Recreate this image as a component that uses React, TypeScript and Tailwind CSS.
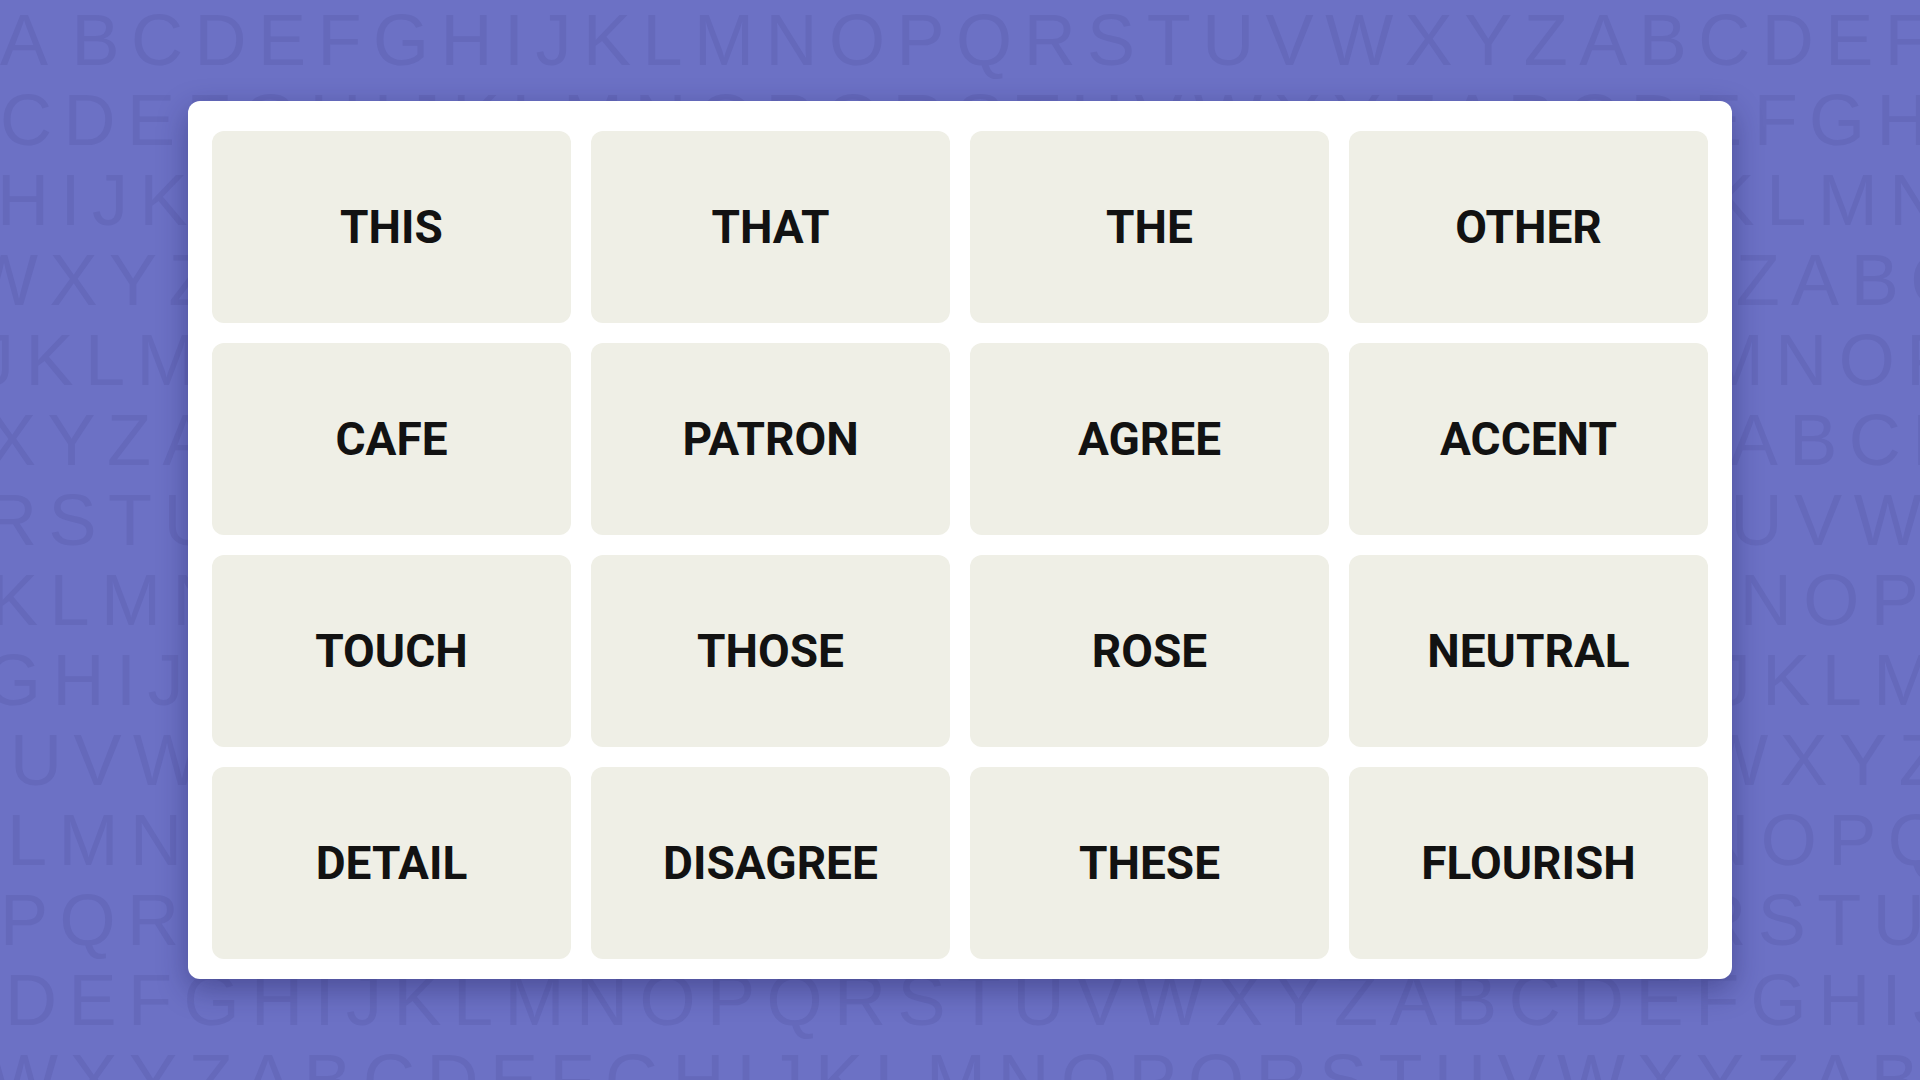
const words = [
  "THIS", "THAT", "THE", "OTHER",
  "CAFE", "PATRON", "AGREE", "ACCENT",
  "TOUCH", "THOSE", "ROSE", "NEUTRAL",
  "DETAIL", "DISAGREE", "THESE", "FLOURISH",
];

const ALPHABET = "ABCDEFGHIJKLMNOPQRSTUVWXYZ";

// each backdrop line starts at its own letter and is nudged sideways a bit
const rows = [
  { start: "A", shift: "ml-0", lead: true },
  { start: "C", shift: "ml-0" },
  { start: "H", shift: "-ml-[3px]" },
  { start: "W", shift: "-ml-[30px]" },
  { start: "J", shift: "-ml-[22px]" },
  { start: "X", shift: "-ml-[12px]" },
  { start: "R", shift: "-ml-[15px]" },
  { start: "K", shift: "-ml-[10px]" },
  { start: "G", shift: "-ml-[15px]" },
  { start: "U", shift: "ml-[10px]" },
  { start: "L", shift: "ml-[7px]" },
  { start: "P", shift: "ml-0" },
  { start: "D", shift: "ml-[5px]" },
  { start: "W", shift: "-ml-[10px]" },
];

const lineFrom = (start: string, count: number) => {
  const i = ALPHABET.indexOf(start);
  let out = "";
  for (let k = 0; k < count; k++) out += ALPHABET[(i + k) % 26];
  return out;
};

const LetterBackdrop = () => (
  <div className="absolute inset-0 overflow-hidden select-none">
    {rows.map((row, idx) => (
      <div
        key={idx}
        className={`${row.shift} whitespace-nowrap text-[72px] leading-[80px] tracking-[11.5px] text-[#6569bb] font-['Liberation_Sans',Arial,sans-serif]`}
      >
        {row.lead ? (
          <>
            <span className="mr-[12px]">{row.start}</span>
            {lineFrom(ALPHABET[(ALPHABET.indexOf(row.start) + 1) % 26], 39)}
          </>
        ) : (
          lineFrom(row.start, 40)
        )}
      </div>
    ))}
  </div>
);

const Tile = ({ word }: { word: string }) => (
  <div className="h-[192px] rounded-xl bg-[#efefe6] flex items-center justify-center">
    <span className="text-[46px] leading-none font-bold text-[#121212] font-['Roboto',Arial,sans-serif]">
      {word}
    </span>
  </div>
);

export default function App() {
  return (
    <div className="relative h-screen w-full overflow-hidden bg-[#6c71c5]">
      <LetterBackdrop />
      <div className="relative h-full flex items-center justify-center">
        <div className="w-[1544px] rounded-xl bg-white px-6 pt-[30px] pb-5 shadow-[0_10px_30px_rgba(25,25,80,0.4)]">
          <div className="grid grid-cols-4 gap-5">
            {words.map((w) => (
              <Tile key={w} word={w} />
            ))}
          </div>
        </div>
      </div>
    </div>
  );
}
